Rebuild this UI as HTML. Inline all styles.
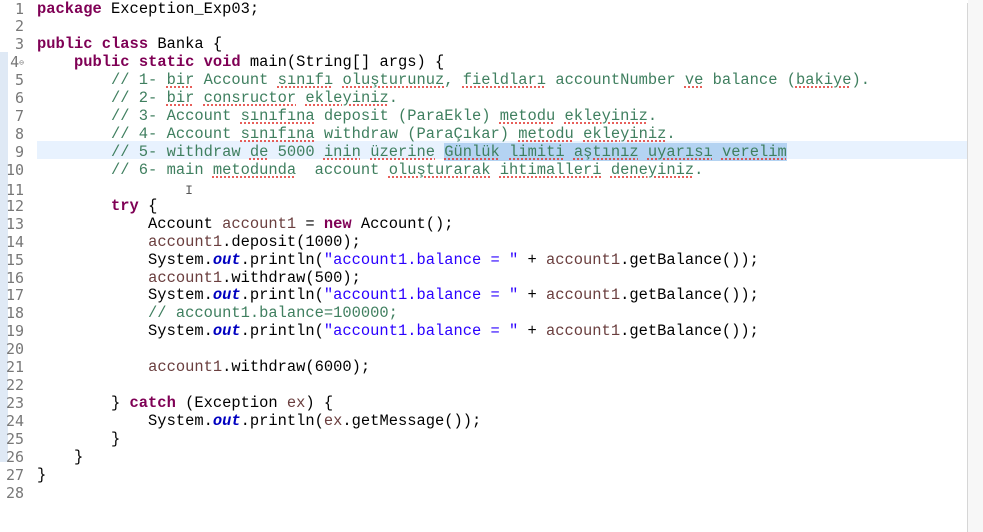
<!DOCTYPE html>
<html><head><meta charset="utf-8"><style>
html,body{margin:0;padding:0;width:983px;height:532px;overflow:hidden;background:#fff}
body{position:relative;font-family:"Liberation Mono","DejaVu Sans Mono",monospace;font-size:15.43px}
#w{position:absolute;left:0;top:1.5px;width:983px;height:532px}
.l{position:absolute;left:0;height:17.93px;line-height:17.93px;white-space:pre}
.n{position:absolute;left:0;width:24px;text-align:right;color:#787878;font-family:"DejaVu Sans Mono",monospace;font-size:15px}
.c{position:absolute;left:37px;color:#000}
.k{color:#7f0055;font-weight:bold}
.cm{color:#3f7f5f}
.s{color:#2a00ff}
.o{color:#0000c0;font-weight:bold;font-style:italic}
.v{color:#6a3e3e}
.u{text-decoration:underline dotted #e0302a;text-underline-offset:3px}
.sel{background:#b4d3f2}
#hl{position:absolute;left:37px;top:141px;width:930px;height:18px;background:#e8f2fe}
#rl{position:absolute;left:967px;top:3px;width:1px;height:529px;background:#d6d6d6}
#rs{position:absolute;left:968px;top:0;width:15px;height:532px;background:#f7f7f7}
#lg{position:absolute;left:0;top:52px;width:8px;height:410px;background:#dfe9f5}
</style></head><body>
<div id="hl"></div><div id="rl"></div><div id="rs"></div><div id="lg"></div>
<div id="w">
<div class="l" style="top:-1px"><span class="n">1</span><span class="c"><span class="k">package</span> Exception_Exp03;</span></div>
<div class="l" style="top:16.9px"><span class="n">2</span></div>
<div class="l" style="top:34.9px"><span class="n">3</span><span class="c"><span class="k">public</span> <span class="k">class</span> Banka {</span></div>
<div class="l" style="top:52.8px"><span class="n">4<span style="font-size:8px;vertical-align:top">⊖</span></span><span class="c">    <span class="k">public</span> <span class="k">static</span> <span class="k">void</span> main(String[] args) {</span></div>
<div class="l" style="top:70.7px"><span class="n">5</span><span class="c cm">        // 1- <span class="u">bir</span> Account <span class="u">sınıfı</span> <span class="u">oluşturunuz</span>, <span class="u">fieldları</span> accountNumber <span class="u">ve</span> balance (<span class="u">bakiye</span>).</span></div>
<div class="l" style="top:88.7px"><span class="n">6</span><span class="c cm">        // 2- <span class="u">bir</span> <span class="u">consructor</span> <span class="u">ekleyiniz</span>.</span></div>
<div class="l" style="top:106.6px"><span class="n">7</span><span class="c cm">        // 3- Account <span class="u">sınıfına</span> deposit (ParaEkle) <span class="u">metodu</span> <span class="u">ekleyiniz</span>.</span></div>
<div class="l" style="top:124.5px"><span class="n">8</span><span class="c cm">        // 4- Account <span class="u">sınıfına</span> withdraw (ParaÇıkar) <span class="u">metodu</span> <span class="u">ekleyiniz</span>.</span></div>
<div class="l" style="top:142.4px"><span class="n">9</span><span class="c cm">        // 5- withdraw <span class="u">de</span> 5000 <span class="u">inin</span> <span class="u">üzerine</span> <span class="sel"><span class="u">Günlük</span> <span class="u">limiti</span> <span class="u">aştınız</span> <span class="u">uyarısı</span> <span class="u">verelim</span></span></span></div>
<div class="l" style="top:160.4px"><span class="n">10</span><span class="c cm">        // 6- main <span class="u">metodunda</span>  account <span class="u">oluşturarak</span> <span class="u">ihtimalleri</span> <span class="u">deneyiniz</span>.</span></div>
<div class="l" style="top:180px"><span class="n">11</span><span class="c">                <span style="color:#555;font-size:13px">I</span></span></div>
<div class="l" style="top:196.2px"><span class="n">12</span><span class="c">        <span class="k">try</span> {</span></div>
<div class="l" style="top:214.2px"><span class="n">13</span><span class="c">            Account <span class="v">account1</span> = <span class="k">new</span> Account();</span></div>
<div class="l" style="top:232.1px"><span class="n">14</span><span class="c">            <span class="v">account1</span>.deposit(1000);</span></div>
<div class="l" style="top:250px"><span class="n">15</span><span class="c">            System.<span class="o">out</span>.println(<span class="s">"account1.balance = "</span> + <span class="v">account1</span>.getBalance());</span></div>
<div class="l" style="top:268px"><span class="n">16</span><span class="c">            <span class="v">account1</span>.withdraw(500);</span></div>
<div class="l" style="top:285.9px"><span class="n">17</span><span class="c">            System.<span class="o">out</span>.println(<span class="s">"account1.balance = "</span> + <span class="v">account1</span>.getBalance());</span></div>
<div class="l" style="top:303.8px"><span class="n">18</span><span class="c cm">            // account1.balance=100000;</span></div>
<div class="l" style="top:321.7px"><span class="n">19</span><span class="c">            System.<span class="o">out</span>.println(<span class="s">"account1.balance = "</span> + <span class="v">account1</span>.getBalance());</span></div>
<div class="l" style="top:339.7px"><span class="n">20</span></div>
<div class="l" style="top:357.6px"><span class="n">21</span><span class="c">            <span class="v">account1</span>.withdraw(6000);</span></div>
<div class="l" style="top:375.5px"><span class="n">22</span></div>
<div class="l" style="top:393.5px"><span class="n">23</span><span class="c">        } <span class="k">catch</span> (Exception <span class="v">ex</span>) {</span></div>
<div class="l" style="top:411.4px"><span class="n">24</span><span class="c">            System.<span class="o">out</span>.println(<span class="v">ex</span>.getMessage());</span></div>
<div class="l" style="top:429.3px"><span class="n">25</span><span class="c">        }</span></div>
<div class="l" style="top:447.2px"><span class="n">26</span><span class="c">    }</span></div>
<div class="l" style="top:465.2px"><span class="n">27</span><span class="c">}</span></div>
<div class="l" style="top:483.1px"><span class="n">28</span></div>
</div>
</body></html>
